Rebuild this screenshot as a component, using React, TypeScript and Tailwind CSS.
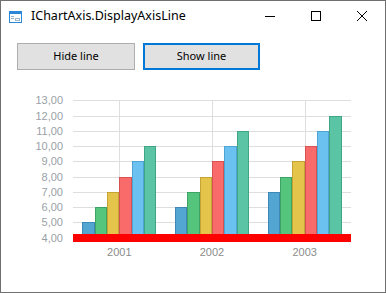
import React from 'react';

const TOP = 100.3;
const STEP = 15.25;
const yOf = (v: number) => TOP + (13 - v) * STEP;

const COLORS = [
  { fill: '#53a5d2', stroke: '#3d88b7' },
  { fill: '#55c57e', stroke: '#3ea465' },
  { fill: '#e4c44b', stroke: '#c4a434' },
  { fill: '#f96a6a', stroke: '#d65252' },
  { fill: '#6bc1ef', stroke: '#4ea4d5' },
  { fill: '#5bc4a4', stroke: '#3fa585' },
];

const GROUPS = [
  { year: '2001', center: 119.3, values: [5, 6, 7, 8, 9, 10] },
  { year: '2002', center: 212, values: [6, 7, 8, 9, 10, 11] },
  { year: '2003', center: 304.7, values: [7, 8, 9, 10, 11, 12] },
];

const LEVELS = [13, 12, 11, 10, 9, 8, 7, 6, 5, 4];

const WindowIcon = () => (
  <svg width="13" height="12" viewBox="0 0 13 12" className="shrink-0">
    <rect x="0.5" y="0.5" width="12" height="11" fill="#fff" stroke="#2b88d8" />
    <rect x="1" y="1" width="11" height="2" fill="#2b88d8" />
    <line x1="2" y1="5.5" x2="5" y2="5.5" stroke="#9cb6cc" />
    <line x1="2" y1="7.5" x2="5" y2="7.5" stroke="#9cb6cc" />
    <rect x="6.5" y="7.5" width="4" height="2" fill="none" stroke="#9cb6cc" />
  </svg>
);

const Chart = () => (
  <svg width="384" height="175" viewBox="1 90 384 175" className="block">
    {LEVELS.map((v) => (
      <line key={v} x1="73" x2="351" y1={Math.round(yOf(v)) + 0.5} y2={Math.round(yOf(v)) + 0.5} stroke="#dedede" />
    ))}
    {GROUPS.map((g) => (
      <line key={g.year} x1={Math.round(g.center) + 0.5} x2={Math.round(g.center) + 0.5} y1="100" y2="234" stroke="#dedede" />
    ))}
    {LEVELS.map((v) => (
      <text
        key={v}
        x="63"
        y={yOf(v) + 4}
        textAnchor="end"
        fontSize="11"
        fill="#9a9fa6"
        fontFamily="'Liberation Sans', Arial, sans-serif"
      >
        {v.toFixed(2).replace('.', ',')}
      </text>
    ))}
    {GROUPS.map((g) =>
      g.values.map((v, i) => {
        const w = 74 / 6;
        const x = Math.round(g.center - 37 + i * w);
        const x2 = Math.round(g.center - 37 + (i + 1) * w);
        const top = Math.round(yOf(v));
        return (
          <rect
            key={g.year + i}
            x={x + 0.5}
            y={top + 0.5}
            width={x2 - x - 1}
            height={238 - top}
            fill={COLORS[i].fill}
            stroke={COLORS[i].stroke}
          />
        );
      })
    )}
    <rect x="73" y="234" width="278" height="8" fill="#ff0000" />
    {GROUPS.map((g) => (
      <text
        key={g.year}
        x={g.center}
        y="256"
        textAnchor="middle"
        fontSize="11"
        fill="#8c8c8c"
        fontFamily="'Liberation Sans', Arial, sans-serif"
      >
        {g.year}
      </text>
    ))}
  </svg>
);

export default function App() {
  return (
    <div className="w-[386px] h-[293px] bg-white border border-[#707070] flex flex-col font-['Noto_Sans',sans-serif] overflow-hidden">
      {/* Title bar */}
      <div className="h-[30px] flex items-center shrink-0">
        <div className="pl-[8px] pt-[1px] flex items-center">
          <WindowIcon />
        </div>
        <span className="ml-[9px] text-[12.5px] text-black leading-none">IChartAxis.DisplayAxisLine</span>
        <div className="ml-auto flex items-center h-full">
          <div className="w-[46px] h-full flex items-center justify-center">
            <div className="w-[10px] h-px bg-black" />
          </div>
          <div className="w-[46px] h-full flex items-center justify-center">
            <div className="w-[10px] h-[10px] border border-black" />
          </div>
          <div className="w-[46px] h-full flex items-center justify-center">
            <svg width="10" height="10" viewBox="0 0 10 10">
              <path d="M0 0 L10 10 M10 0 L0 10" stroke="#000" strokeWidth="1" />
            </svg>
          </div>
        </div>
      </div>

      {/* Buttons */}
      <div className="flex gap-[8px] pl-[16px] mt-[12px]">
        <button className="w-[118px] h-[27px] bg-[#e1e1e1] border border-[#adadad] text-[11px] text-black">
          Hide line
        </button>
        <button className="w-[117px] h-[27px] bg-[#e1e1e1] border-2 border-[#0078d7] text-[11px] text-black">
          Show line
        </button>
      </div>

      {/* Chart */}
      <div className="mt-[20px]">
        <Chart />
      </div>
    </div>
  );
}
